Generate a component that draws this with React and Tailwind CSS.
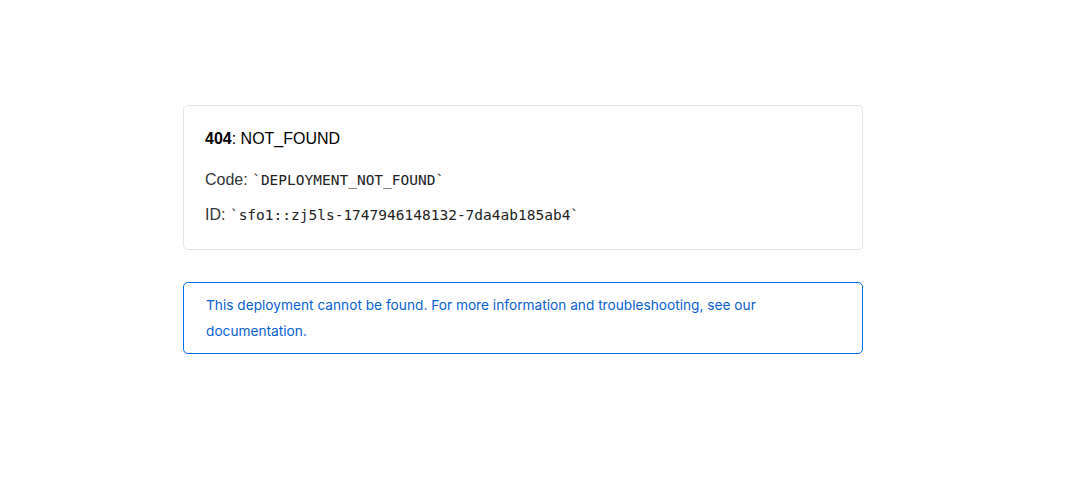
export default function App() {
  return (
    <div className="min-h-screen bg-white pt-[105px] font-['Liberation_Sans',Arial,sans-serif]">
      <div className="w-[680px] ml-[183px]">
        {/* Error card */}
        <div className="rounded-[5px] border border-[#e5e5e5] px-[21px] pt-[21px] pb-[22px] text-[#333]">
          <p className="text-[16px] leading-[24px] text-black">
            <strong className="font-bold">404</strong>: NOT_FOUND
          </p>
          <p className="mt-[17px] text-[16px] leading-[24px]">
            Code:{' '}
            <code className="font-['DejaVu_Sans_Mono',monospace] text-[14.5px] text-[#222]">
              `DEPLOYMENT_NOT_FOUND`
            </code>
          </p>
          <p className="mt-[11px] text-[16px] leading-[24px]">
            ID:{' '}
            <code className="font-['DejaVu_Sans_Mono',monospace] text-[14.5px] text-[#222]">
              `sfo1::zj5ls-1747946148132-7da4ab185ab4`
            </code>
          </p>
        </div>

        {/* Notice */}
        <div className="mt-[32px] rounded-[5px] border border-[#0070f3] px-[22px] py-[9px] pr-[80px] font-['Inter',sans-serif] text-[13.7px] leading-[26px] text-[#0761d1]">
          This deployment cannot be found. For more information and troubleshooting, see our{' '}
          documentation.
        </div>
      </div>
    </div>
  )
}
